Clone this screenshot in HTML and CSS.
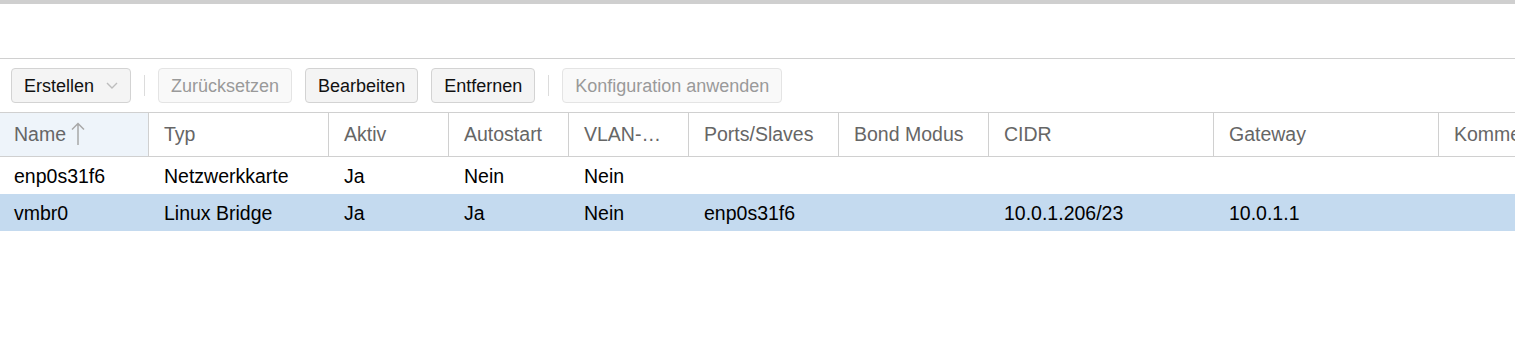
FILE: index.html
```html
<!DOCTYPE html>
<html lang="de">
<head>
<meta charset="utf-8">
<title>Netzwerk</title>
<link rel="stylesheet" href="styles.css">
</head>
<body>
<div class="page">
  <div class="topbar"></div>
  <div class="spacer"></div>
  <div class="toolbar">
    <button class="btn">Erstellen<svg class="chev" width="12" height="7" viewBox="0 0 12 7"><path d="M1 1 L6 6 L11 1" fill="none" stroke="#bdbdbd" stroke-width="1.4"/></svg></button>
    <span class="sep"></span>
    <button class="btn disabled">Zurücksetzen</button>
    <button class="btn">Bearbeiten</button>
    <button class="btn">Entfernen</button>
    <span class="sep"></span>
    <button class="btn disabled">Konfiguration anwenden</button>
  </div>
  <div class="grid">
    <div class="row head">
      <div class="cell hcell sorted">Name<svg class="sort" width="14" height="24" viewBox="0 0 14 24"><path d="M7 1.5 V23 M1 7.5 L7 1.5 L13 7.5" fill="none" stroke="#a8a8a8" stroke-width="1.5"/></svg></div>
      <div class="cell hcell">Typ</div>
      <div class="cell hcell">Aktiv</div>
      <div class="cell hcell">Autostart</div>
      <div class="cell hcell">VLAN-aware</div>
      <div class="cell hcell">Ports/Slaves</div>
      <div class="cell hcell">Bond Modus</div>
      <div class="cell hcell">CIDR</div>
      <div class="cell hcell">Gateway</div>
      <div class="cell hcell">Kommentar</div>
    </div>
    <div class="row data">
      <div class="cell">enp0s31f6</div>
      <div class="cell">Netzwerkkarte</div>
      <div class="cell">Ja</div>
      <div class="cell">Nein</div>
      <div class="cell">Nein</div>
      <div class="cell"></div>
      <div class="cell"></div>
      <div class="cell"></div>
      <div class="cell"></div>
      <div class="cell"></div>
    </div>
    <div class="row data selected">
      <div class="cell">vmbr0</div>
      <div class="cell">Linux Bridge</div>
      <div class="cell">Ja</div>
      <div class="cell">Ja</div>
      <div class="cell">Nein</div>
      <div class="cell">enp0s31f6</div>
      <div class="cell"></div>
      <div class="cell">10.0.1.206/23</div>
      <div class="cell">10.0.1.1</div>
      <div class="cell"></div>
    </div>
  </div>
</div>
</body>
</html>
```
FILE: styles.css
```css
html, body {
  margin: 0;
  padding: 0;
  background: #fff;
}
body {
  font-family: "Liberation Sans", Arial, sans-serif;
  overflow: hidden;
}
.page {
  width: 1515px;
  overflow: hidden;
}
.topbar {
  height: 4px;
  background: #cfcfcf;
}
.spacer {
  height: 54px;
  border-bottom: 1px solid #d0d0d0;
}
.toolbar {
  display: flex;
  align-items: center;
  gap: 13px;
  height: 53px;
  padding: 0 11px;
  box-sizing: border-box;
}
.btn {
  display: flex;
  align-items: center;
  gap: 12px;
  height: 35px;
  box-sizing: border-box;
  padding: 2px 12px 0;
  border: 1px solid #d3d3d3;
  border-radius: 4px;
  background: #f4f4f4;
  color: #111;
  font-family: "Liberation Sans", Arial, sans-serif;
  font-size: 18px;
  margin-top: -1px;
}
.btn.disabled {
  background: #f9f9f9;
  border-color: #e4e4e4;
  color: #9a9a9a;
}
.chev {
  display: block;
  margin-top: -1px;
}
.sep {
  width: 1px;
  height: 21px;
  background: #dcdcdc;
}
.grid {
  border-top: 1px solid #d0d0d0;
  width: 1720px;
}
.row {
  display: grid;
  grid-template-columns: 149px 180px 120px 120px 120px 150px 150px 225px 225px 200px;
}
.cell {
  padding: 0 14px 0 15px;
  white-space: nowrap;
  overflow: hidden;
  text-overflow: ellipsis;
  font-size: 19.5px;
  color: #000;
}
.cell:first-child {
  padding-left: 14px;
}
.head {
  height: 44px;
  box-sizing: border-box;
  border-bottom: 1px solid #d0d0d0;
}
.hcell {
  line-height: 43px;
  height: 43px;
  color: #666;
  border-right: 1px solid #d0d0d0;
  padding-right: 20px;
}
.hcell.sorted {
  background: #eef4fa;
}
.sort {
  display: inline-block;
  vertical-align: middle;
  margin-left: 5px;
  margin-top: -4px;
}
.data {
  height: 37px;
}
.data .cell {
  height: 37px;
  line-height: 37px;
  padding-top: 1px;
  box-sizing: border-box;
}
.selected {
  background: #c4daef;
}
```
